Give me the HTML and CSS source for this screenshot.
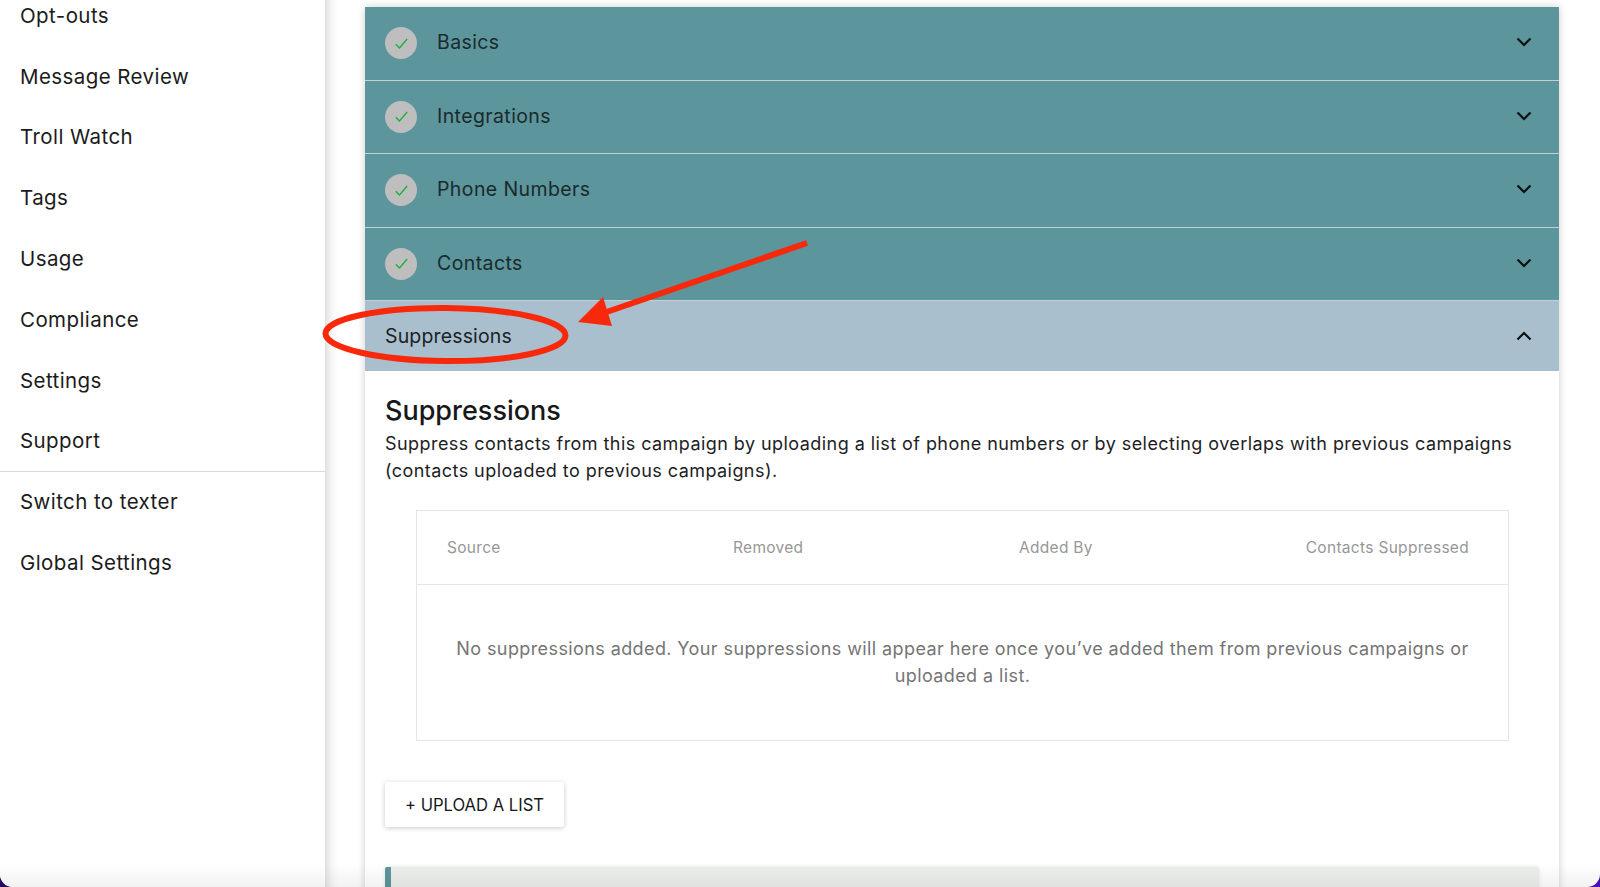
FILE: index.html
```html
<!DOCTYPE html>
<html lang="en">
<head>
<meta charset="utf-8">
<title>Campaign Suppressions</title>
<link rel="stylesheet" href="styles.css">
</head>
<body>
<div class="page">
  <nav class="sidebar">
    <a class="nav-item">Opt-outs</a>
    <a class="nav-item">Message Review</a>
    <a class="nav-item">Troll Watch</a>
    <a class="nav-item">Tags</a>
    <a class="nav-item">Usage</a>
    <a class="nav-item">Compliance</a>
    <a class="nav-item">Settings</a>
    <a class="nav-item">Support</a>
    <div class="nav-divider"></div>
    <a class="nav-item">Switch to texter</a>
    <a class="nav-item">Global Settings</a>
  </nav>
  <main class="main">
    <section class="panel">
      <div class="row done">
        <span class="status"><svg viewBox="0 0 16 16" class="check"><path d="M1 9 5.500 13.500 15 2.500"/></svg></span>
        <span class="row-title">Basics</span>
        <svg viewBox="0 0 16 10" class="chev"><path d="M1.500 1.500 8 8l6.500-6.500"/></svg>
      </div>
      <div class="row done">
        <span class="status"><svg viewBox="0 0 16 16" class="check"><path d="M1 9 5.500 13.500 15 2.500"/></svg></span>
        <span class="row-title">Integrations</span>
        <svg viewBox="0 0 16 10" class="chev"><path d="M1.500 1.500 8 8l6.500-6.500"/></svg>
      </div>
      <div class="row done">
        <span class="status"><svg viewBox="0 0 16 16" class="check"><path d="M1 9 5.500 13.500 15 2.500"/></svg></span>
        <span class="row-title">Phone Numbers</span>
        <svg viewBox="0 0 16 10" class="chev"><path d="M1.500 1.500 8 8l6.500-6.500"/></svg>
      </div>
      <div class="row done">
        <span class="status"><svg viewBox="0 0 16 16" class="check"><path d="M1 9 5.500 13.500 15 2.500"/></svg></span>
        <span class="row-title">Contacts</span>
        <svg viewBox="0 0 16 10" class="chev"><path d="M1.500 1.500 8 8l6.500-6.500"/></svg>
      </div>
      <div class="row active">
        <span class="row-title">Suppressions</span>
        <svg viewBox="0 0 16 10" class="chev"><path d="M1.500 8.500 8 2l6.500 6.500"/></svg>
      </div>
      <div class="content">
        <h2 class="heading">Suppressions</h2>
        <p class="desc">Suppress contacts from this campaign by uploading a list of phone numbers or by selecting overlaps with previous campaigns (contacts uploaded to previous campaigns).</p>
        <div class="table">
          <div class="thead">
            <span>Source</span>
            <span>Removed</span>
            <span>Added By</span>
            <span class="last">Contacts Suppressed</span>
          </div>
          <div class="empty">No suppressions added. Your suppressions will appear here once you’ve added them from previous campaigns or uploaded a list.</div>
        </div>
        <button class="upload">+ UPLOAD A LIST</button>
        <div class="next-bar"></div>
      </div>
    </section>
  </main>
  <svg class="annotation" viewBox="0 0 1600 887" aria-hidden="true">
    <ellipse cx="445.500" cy="334.500" rx="120" ry="26.500" transform="rotate(0.500 445.500 334.500)"/>
    <path class="shaft" d="M807 243 595 316"/>
    <path class="head" d="M578 322 603 297 612 326Z"/>
  </svg>
  <div class="bottom-fade"></div>
</div>
</body>
</html>
```
FILE: styles.css
```css
* { box-sizing: border-box; }
html, body { margin: 0; height: 100%; overflow: hidden; }
body {
  background: linear-gradient(90deg, #2c0a63, #4a10b4);
  font-family: Inter, "Liberation Sans", sans-serif;
  color: #1d1d1f;
}
.page {
  position: relative;
  display: flex;
  height: 887px;
  background: #fff;
  border-radius: 0 0 13px 13px;
  overflow: hidden;
}
.sidebar {
  flex: 0 0 325px;
  display: flex;
  flex-direction: column;
  margin-top: -15px;
  margin-bottom: -15px;
  background: #fff;
  box-shadow: 1px 0 12px rgba(0, 0, 0, 0.22);
  z-index: 1;
}
.nav-item {
  display: flex;
  align-items: center;
  flex: none;
  height: 60.800px;
  padding-left: 20px;
  font-size: 20.500px;
  letter-spacing: 0.420px;
  color: #1b1b1b;
}
.nav-divider { flex: none; height: 1px; margin-bottom: -1px; background: #d9d9d9; }
.main {
  flex: 1;
  padding: 7px 41px 0 40px;
}
.panel {
  background: #fff;
  box-shadow: 0 0 8px rgba(0, 0, 0, 0.2);
  min-height: 900px;
}
.row {
  display: flex;
  align-items: center;
  padding: 0 27px 0 20px;
  font-size: 19.500px;
  letter-spacing: 0.400px;
  color: #1a2a2c;
}
.done {
  height: 73.500px;
  background: #5c959b;
  border-bottom: 1.500px solid #c6cfd0;
}
.done .row-title, .done .chev { margin-top: -2px; }
.active {
  height: 70px;
  background: #a9bfce;
  color: #1b1f24;
  letter-spacing: 0.150px;
}
.status {
  flex: none;
  display: flex;
  align-items: center;
  justify-content: center;
  width: 32px;
  height: 32px;
  margin-right: 20px;
  border-radius: 50%;
  background: #bdbebd;
}
.check { width: 13px; height: 13px; fill: none; stroke: #1cae3c; stroke-width: 1.600; }
.row-title { flex: 1; }
.chev { flex: none; width: 16px; height: 10px; fill: none; stroke: #0b1012; stroke-width: 2.200; }
.content { padding: 22px 20px 0; }
.heading {
  margin: 0;
  font-size: 27px;
  font-weight: 500;
  line-height: 36px;
  color: #17181a;
}
.desc {
  margin: 2px 0 0;
  font-size: 18px;
  letter-spacing: 0.440px;
  line-height: 26.500px;
  color: #1d1d1f;
}
.table {
  width: 1093px;
  margin: 26px 0 0 31px;
  border: 1.500px solid #e6e6e6;
}
.thead {
  display: grid;
  grid-template-columns: 286px 286px 1fr auto;
  align-items: center;
  height: 74px;
  padding: 0 39px 0 30px;
  border-bottom: 1.500px solid #e6e6e6;
  font-size: 15.500px;
  letter-spacing: 0.300px;
  color: #979797;
}
.empty {
  height: 155px;
  padding: 51px 30px 0;
  text-align: center;
  font-size: 18px;
  letter-spacing: 0.400px;
  line-height: 26.500px;
  color: #757575;
}
.upload {
  display: block;
  width: 179px;
  height: 45px;
  margin-top: 41px;
  padding: 0;
  border: 0;
  border-radius: 2px;
  background: #fff;
  box-shadow: 0 1px 5px rgba(0, 0, 0, 0.22);
  font: inherit;
  font-size: 16.600px;
  color: #17181a;
}
.next-bar {
  height: 60px;
  margin-top: 40px;
  border-left: 6px solid #5c959b;
  border-radius: 2px;
  background: #eceeec;
  box-shadow: 0 0 4px rgba(0, 0, 0, 0.1);
}
.annotation {
  position: absolute;
  inset: 0;
  z-index: 2;
  width: 1600px;
  height: 887px;
  pointer-events: none;
}
.annotation ellipse { fill: none; stroke: #f8290b; stroke-width: 6px; }
.annotation .shaft { fill: none; stroke: #f8290b; stroke-width: 6px; }
.annotation .head { fill: #f8290b; }
.bottom-fade {
  position: absolute;
  left: 0;
  right: 0;
  bottom: 0;
  z-index: 2;
  height: 24px;
  background: linear-gradient(rgba(0, 0, 0, 0), rgba(0, 0, 0, 0.05));
  pointer-events: none;
}
```
